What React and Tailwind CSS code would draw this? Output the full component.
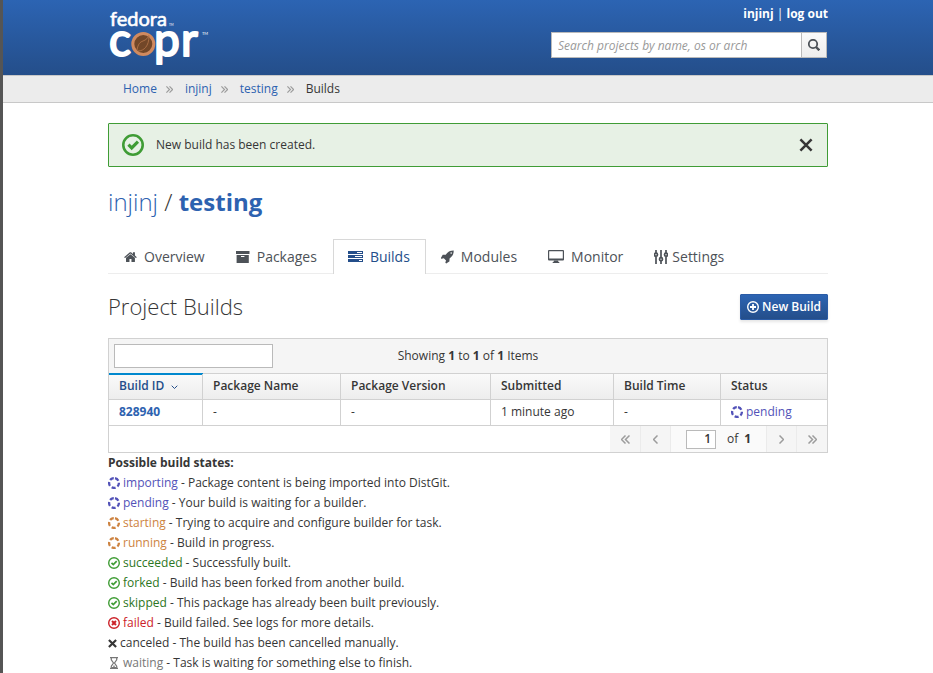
import React from "react";

const HOME =
  "M1472 992v480q0 26-19 45t-45 19h-384v-384h-256v384h-384q-26 0-45-19t-19-45v-480q0-1 .5-3t.5-3l575-474 575 474q1 2 1 6zm223-69l-62 74q-8 9-21 11h-3q-13 0-21-7l-692-577-692 577q-12 8-24 7-13-2-21-11l-62-74q-8-10-7-23.5t11-21.5l719-599q32-26 76-26t76 26l244 204v-195q0-14 9-23t23-9h192q14 0 23 9t9 23v408l219 182q10 8 11 21.5t-7 23.5z";
const ROCKET =
  "M1440 448q0-40-28-68t-68-28-68 28-28 68 28 68 68 28 68-28 28-68zm224-288q0 249-75.5 430.5t-253.5 360.5q-81 80-195 176l-20 379q-2 16-16 26l-384 224q-7 4-16 4-12 0-23-9l-64-64q-13-14-8-32l85-276-281-281-276 85q-3 1-9 1-14 0-23-9l-64-64q-17-19-5-39l224-384q10-14 26-16l379-20q96-114 176-195 188-187 358-258t431-71q14 0 24 9.5t10 22.5z";

function Logo() {
  return (
    <svg width="102" height="70" viewBox="0 -8 102 70" className="block" role="img" aria-label="fedora copr">
      <g fill="#fff" stroke="#fff" strokeLinejoin="round" className="font-['Lato',sans-serif]">
        <text x="2" y="18" fontSize="20" strokeWidth="0.6">fedora</text>
        <text x="61" y="18" fontSize="3" stroke="none">TM</text>
        <text x="1" y="48" fontSize="46" strokeWidth="2">c</text>
        <text x="46" y="48" fontSize="46" strokeWidth="2">p</text>
        <text x="73" y="48" fontSize="46" strokeWidth="2">r</text>
        <text x="94" y="27" fontSize="4" stroke="none">TM</text>
      </g>
      <circle cx="35.300" cy="36" r="10.500" fill="#724728" stroke="#d08a5f" strokeWidth="3" />
      <path d="M29 42c1-6 3-8 6-9s5-3 6-6M30 43c6 0 11-5 11-15" fill="none" stroke="#b07348" strokeWidth="0.9" />
    </svg>
  );
}

function HomeIcon() {
  return <svg width="13" height="14" viewBox="60 128 1680 1500" fill="currentColor" aria-hidden="true"><path d={HOME} /></svg>;
}
function ArchiveIcon() {
  return (
    <svg width="14" height="14" viewBox="0 0 14 14" fill="currentColor" aria-hidden="true">
      <path d="M0 1h13.5v3H0z" />
      <path fillRule="evenodd" d="M.6 5h12.2v8H.6zM5 6v1h3.4V6z" />
    </svg>
  );
}
function BuildsIcon() {
  return (
    <svg width="15" height="14" viewBox="0 0 15 14" fill="currentColor" aria-hidden="true">
      <path fillRule="evenodd" d="M0 1h15v3H0zM9 2v1h5V2zM0 5h15v3H0zM7 6v1h7V6zM0 9h15v3H0zM11 10v1h3v-1z" />
    </svg>
  );
}
function RocketIcon() {
  return <svg width="13" height="14" viewBox="60 100 1640 1700" fill="currentColor" aria-hidden="true"><path d={ROCKET} /></svg>;
}
function MonitorIcon() {
  return (
    <svg width="16" height="14" viewBox="0 0 16 14" fill="currentColor" aria-hidden="true">
      <path fillRule="evenodd" d="M1 0h14q1 0 1 1v8.500q0 1-1 1H1q-1 0-1-1V1q0-1 1-1zM1.200 1.200v7.300h13.600V1.200z" />
      <path d="M6 10.500h4l.5 1.500h.8v1H4.700v-1h.8z" />
    </svg>
  );
}
function SettingsIcon() {
  return (
    <svg width="14" height="14" viewBox="0 0 14 14" fill="none" stroke="currentColor" strokeWidth="1.700" aria-hidden="true">
      <path d="M2 0v3M2 6.500V14M7 0v7.500M7 11v3M12 0v3M12 6.500V14" />
      <circle cx="2" cy="4.700" r="1.500" />
      <circle cx="7" cy="9.200" r="1.500" />
      <circle cx="12" cy="4.700" r="1.500" />
    </svg>
  );
}
function SearchIcon() {
  return (
    <svg width="12" height="12" viewBox="0 0 12 12" fill="none" stroke="currentColor" aria-hidden="true">
      <circle cx="5" cy="5" r="4.200" strokeWidth="1.800" />
      <path d="M8 8l3.300 3.300" strokeWidth="2.400" />
    </svg>
  );
}
function Chevron({ double, left, className }) {
  return (
    <svg width={double ? 9 : 5} height="9" viewBox={double ? "0 0 9 9" : "0 0 5 9"} fill="none" stroke="currentColor" strokeWidth="1.500" className={className} aria-hidden="true">
      {left ? <path d="M4.500.5l-4 4 4 4" /> : <path d="M.5.5l4 4-4 4" />}
      {double && (left ? <path d="M8.500.5l-4 4 4 4" /> : <path d="M4.500.5l4 4-4 4" />)}
    </svg>
  );
}
function OkIcon({ className }) {
  return (
    <svg viewBox="0 0 12 12" fill="none" stroke="currentColor" className={className} aria-hidden="true">
      <circle cx="6" cy="6" r="5.300" strokeWidth="1.400" />
      <path d="M3.500 5.800l1.800 1.800L8.700 4.200" strokeWidth="1.700" />
    </svg>
  );
}
function SpinnerIcon() {
  return (
    <svg width="12" height="12" viewBox="0 0 12 12" fill="none" stroke="currentColor" aria-hidden="true">
      <circle cx="6" cy="6" r="4.900" strokeWidth="2.300" strokeDasharray="4.058 2.100" strokeDashoffset="-1.050" transform="rotate(-90 6 6)" />
    </svg>
  );
}
function FailIcon() {
  return (
    <svg width="12" height="12" viewBox="0 0 12 12" fill="none" stroke="currentColor" aria-hidden="true">
      <circle cx="6" cy="6" r="5.300" strokeWidth="1.400" />
      <path d="M4 4l4 4M8 4L4 8" strokeWidth="2" />
    </svg>
  );
}
function CrossIcon({ className }) {
  return (
    <svg viewBox="0 0 10 10" fill="none" stroke="currentColor" className={className} aria-hidden="true">
      <path d="M1 1l8 8M9 1L1 9" />
    </svg>
  );
}
function HourglassIcon() {
  return (
    <svg width="12" height="12" viewBox="0 0 12 12" fill="none" stroke="currentColor" aria-hidden="true">
      <path d="M2 .6h8M2 11.400h8" strokeWidth="1.300" />
      <path d="M3.300 1v1.800L5.500 6 3.300 9.200V11M8.700 1v1.800L6.500 6l2.200 3.200V11" strokeWidth="1.200" />
      <path d="M4 10.500h4M5 9.200h2" strokeWidth="1" />
    </svg>
  );
}
function PlusIcon() {
  return (
    <svg width="12" height="12" viewBox="0 0 12 12" fill="none" stroke="currentColor" aria-hidden="true">
      <circle cx="6" cy="6" r="5.300" strokeWidth="1.400" />
      <path d="M6 3v6M3 6h6" strokeWidth="1.800" />
    </svg>
  );
}

const tabs = [
  { label: "Overview", Icon: HomeIcon },
  { label: "Packages", Icon: ArchiveIcon },
  { label: "Builds", Icon: BuildsIcon, active: true },
  { label: "Modules", Icon: RocketIcon },
  { label: "Monitor", Icon: MonitorIcon },
  { label: "Settings", Icon: SettingsIcon, tight: true },
];

const spinner = <SpinnerIcon />;
const ok = <OkIcon className="size-3 text-[#3f9c35]" />;
const states = [
  ["importing", "Package content is being imported into DistGit.", "text-[#5252b8]", spinner],
  ["pending", "Your build is waiting for a builder.", "text-[#5252b8]", spinner],
  ["starting", "Trying to acquire and configure builder for task.", "text-[#cd8341]", spinner],
  ["running", "Build in progress.", "text-[#cd8341]", spinner],
  ["succeeded", "Successfully built.", "text-[#2d7623]", ok],
  ["forked", "Build has been forked from another build.", "text-[#2d7623]", ok],
  ["skipped", "This package has already been built previously.", "text-[#2d7623]", ok],
  ["failed", "Build failed. See logs for more details.", "text-[#cc2229]", <FailIcon />],
  ["canceled", "The build has been cancelled manually.", "", <CrossIcon className="size-[9px] stroke-[2.4]" />],
  ["waiting", "Task is waiting for something else to finish.", "text-[#777]", <HourglassIcon />],
];

const link = "text-[#2d62b0]";
const container = "mx-auto w-full max-w-[750px] px-[15px]";
const th = "h-[26px] border-b border-[#d1d1d1] px-2.5 pb-0.5 text-left font-semibold";
const td = "h-[26px] border-b border-[#d1d1d1] px-2.5 pb-0.5";
const pager = "flex items-center justify-center bg-[#f5f5f5] text-[#9c9c9c]";

export default function App() {
  return (
    <div className="min-h-screen border-l-[3px] border-[#555] bg-white font-['Open_Sans',sans-serif] text-xs leading-5 text-[#363636]">
      <header className="h-[75px] bg-linear-to-b from-[#2c64b3] to-[#244e8a]">
        <div className={`${container} flex justify-between`}>
          <a href="#"><Logo /></a>
          <div className="flex flex-col items-end gap-2 pt-1">
            <nav className="font-bold text-white">
              <a href="#">injinj</a> <span className="font-normal">|</span> <a href="#">log out</a>
            </nav>
            <form className="mr-px flex h-[26px] w-[276px]">
              <input
                type="text"
                aria-label="Search projects"
                placeholder="Search projects by name, os or arch"
                className="min-w-0 grow border border-[#bababa] bg-white px-1.5 pt-0.5 placeholder:text-[#999] placeholder:italic"
              />
              <button type="button" aria-label="Search" className="flex w-[25px] items-center justify-center border border-l-0 border-[#bababa] bg-linear-to-b from-[#fafafa] to-[#ededed] text-[#4d5258]">
                <SearchIcon />
              </button>
            </form>
          </div>
        </div>
      </header>

      <nav aria-label="Breadcrumb" className="h-7 border-y border-[#c8c8c8] bg-[#ececec]">
        <ol className={`${container} flex items-center`}>
          {["Home", "injinj", "testing", "Builds"].map((name, i) => (
            <li key={name} className="flex items-center pt-[3px] first:pl-[15px]">
              {i > 0 && <Chevron double className="mr-3 ml-[9px] size-[7px] text-[#9c9c9c]" />}
              {i < 3 ? <a href="#" className={link}>{name}</a> : <span>{name}</span>}
            </li>
          ))}
        </ol>
      </nav>

      <main className={`${container} pt-5`}>
        <div role="alert" className="flex h-11 items-center rounded-[1px] border border-[#3f9c35] bg-[#e7f1e5] px-[13px]">
          <OkIcon className="mr-3 size-[22px] text-[#3f9c35]" />
          <span className="grow">New build has been created.</span>
          <button type="button" aria-label="Close"><CrossIcon className="mr-px size-3.5 stroke-[1.8]" /></button>
        </div>

        <h1 className="mt-[19px] mb-[21px] text-2xl leading-8 font-light">
          <a href="#" className={link}>injinj</a> / <a href="#" className={`${link} font-bold`}>testing</a>
        </h1>

        <nav className="flex h-[35px] border-b border-[#ededed] text-sm text-[#4d5258]">
          {tabs.map(({ label, Icon, active, tight }) => (
            <a
              key={label}
              href="#"
              className={`-mb-px flex items-center border border-b-0 pr-[15px] pl-[14px] first:pl-[15px] ${tight ? "gap-1" : "gap-[7px]"} ${active ? "border-[#d8d8d8] bg-white text-[#244e8a]" : "border-transparent"}`}
            >
              <Icon />
              {label}
            </a>
          ))}
        </nav>

        <div className="mt-5 mb-[18px] flex h-[26px] items-start justify-between">
          <h2 className="text-[22px] leading-6 font-light">Project Builds</h2>
          <a href="#" className="flex h-[26px] items-center gap-[3px] rounded-[1px] border border-[#2b5ca6] bg-linear-to-b from-[#2c64b3] to-[#244e8a] px-1.5 font-semibold text-white shadow-[0_2px_3px_rgba(3,3,3,0.1)]">
            <PlusIcon />
            New Build
          </a>
        </div>

        <section className="border border-[#d1d1d1]">
          <div className="grid h-[35px] grid-cols-[1fr_auto_1fr] items-center border-b border-[#d1d1d1] bg-[#f5f5f5]">
            <input type="text" aria-label="Filter builds" className="ml-[5px] h-6 w-[159px] border border-[#bababa] bg-white px-1.5" />
            <p>Showing <b>1</b> to <b>1</b> of <b>1</b> Items</p>
          </div>
          <table className="w-full table-fixed border-separate border-spacing-0">
            <colgroup>
              <col className="w-[94px]" />
              <col className="w-[138px]" />
              <col className="w-[150px]" />
              <col className="w-[123px]" />
              <col className="w-[107px]" />
              <col />
            </colgroup>
            <thead className="bg-linear-to-b from-[#fafafa] to-[#ededed]">
              <tr>
                <th className={`${th} border-r text-[#244e8a] shadow-[inset_0_1px_0_#0088ce,0_-1px_0_#0088ce]`}>
                  <button type="button" className="flex items-center gap-[7px] font-semibold">
                    Build ID
                    <svg width="7" height="5" viewBox="0 0 7 5" fill="none" stroke="currentColor" className="mt-1" aria-hidden="true"><path d="M.7.7l2.800 2.800L6.300.7" /></svg>
                  </button>
                </th>
                <th className={`${th} border-r`}>Package Name</th>
                <th className={`${th} border-r`}>Package Version</th>
                <th className={`${th} border-r`}>Submitted</th>
                <th className={`${th} border-r`}>Build Time</th>
                <th className={th}>Status</th>
              </tr>
            </thead>
            <tbody>
              <tr>
                <td className={`${td} border-r`}><a href="#" className={`${link} font-bold`}>828940</a></td>
                <td className={`${td} border-r`}>-</td>
                <td className={`${td} border-r`}>-</td>
                <td className={`${td} border-r`}>1 minute ago</td>
                <td className={`${td} border-r`}>-</td>
                <td className={td}>
                  <span className="flex items-center gap-[3px] text-[#5252b8]"><SpinnerIcon /> pending</span>
                </td>
              </tr>
            </tbody>
          </table>
          <div className="flex h-[26px] justify-end">
            <button type="button" aria-label="First page" className={`${pager} w-[30px]`}><Chevron double left /></button>
            <button type="button" aria-label="Previous page" className={`${pager} w-[30px] border-l border-[#ebebeb]`}><Chevron left /></button>
            <div className="flex w-24 items-center border-l border-[#ebebeb] bg-[#fafafa] pl-[15px]">
              <input type="text" aria-label="Page" defaultValue="1" className="mr-[11px] h-[19px] w-[30px] border border-[#bababa] bg-white pr-1 text-right font-semibold" />
              <span>of</span>
              <b className="ml-1.5">1</b>
            </div>
            <button type="button" aria-label="Next page" className={`${pager} w-[30px] border-l border-[#ebebeb]`}><Chevron /></button>
            <button type="button" aria-label="Last page" className={`${pager} w-[31px] border-l border-[#ebebeb]`}><Chevron double /></button>
          </div>
        </section>

        <h3 className="font-bold">Possible build states:</h3>
        <ul>
          {states.map(([name, text, color, icon]) => (
            <li key={name} className="flex items-center">
              <span className={`flex items-center gap-[3px] ${color}`}>{icon}{name}</span>
              <span className="whitespace-pre"> - {text}</span>
            </li>
          ))}
        </ul>
      </main>
    </div>
  );
}
